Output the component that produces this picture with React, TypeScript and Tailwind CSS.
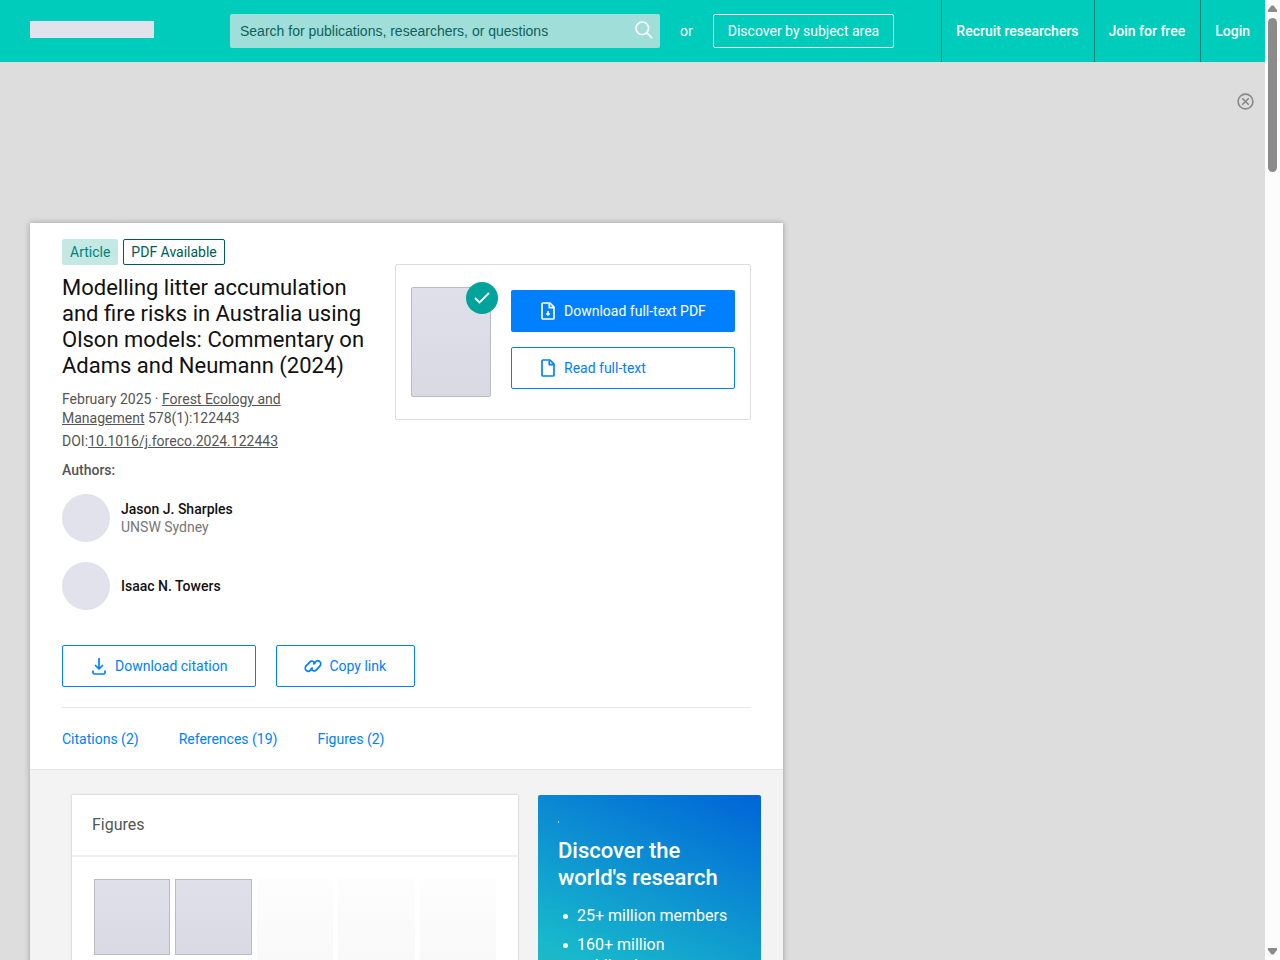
import type { ReactNode } from 'react';

const authors = [
  { name: 'Jason J. Sharples', affiliation: 'UNSW Sydney' },
  { name: 'Isaac N. Towers', affiliation: '' },
];

const tabs = ['Citations (2)', 'References (19)', 'Figures (2)'];

const benefits = ['25+ million members', '160+ million publication pages', '2.3+ billion citations'];

function SearchIcon() {
  return (
    <svg width="18" height="18" viewBox="0 0 18 18" fill="none" stroke="currentColor" strokeWidth="1.6">
      <circle cx="7.3" cy="7.3" r="6.3" />
      <path d="M11.8 11.8l5 5" strokeLinecap="round" />
    </svg>
  );
}

function FileIcon({ download = false }: { download?: boolean }) {
  return (
    <svg width="14" height="18" viewBox="0 0 14 18" fill="none" stroke="currentColor" strokeWidth="1.7" strokeLinejoin="round">
      <path d="M2 1h7l4 4.2V16a1 1 0 0 1-1 1H2a1 1 0 0 1-1-1V2a1 1 0 0 1 1-1z" />
      <path d="M8.3 1.5v4.2H13" />
      {download && <path d="M7 9v4" />}
      {download && <path d="M5.200 11.800L7 13.600l1.800-1.800z" fill="currentColor" strokeWidth="1" />}
    </svg>
  );
}

function DownloadIcon() {
  return (
    <svg width="14" height="18" viewBox="0 0 14 18" fill="none" stroke="currentColor" strokeWidth="1.7" strokeLinecap="round" strokeLinejoin="round">
      <path d="M7 1.5v10M3.5 8.5L7 12l3.5-3.5" />
      <path d="M1 14v1.5a1.500 1.500 0 0 0 1.500 1.500h9a1.500 1.500 0 0 0 1.500-1.500V14" />
    </svg>
  );
}

function LinkIcon() {
  return (
    <svg width="18" height="14" viewBox="0 0 18 14" fill="none" stroke="currentColor" strokeWidth="1.700" strokeLinecap="round">
      <path transform="translate(6 7.200) rotate(-48)" d="M0 3H-2.600a3 3 0 0 1 0-6H2.800a3 3 0 0 1 2.400 4.800" />
      <path transform="translate(12 6.800) rotate(132)" d="M0 3H-2.600a3 3 0 0 1 0-6H2.800a3 3 0 0 1 2.400 4.800" />
    </svg>
  );
}

function Arrow({ down = false }: { down?: boolean }) {
  return (
    <svg width="9" height="7" viewBox="0 0 9 7" fill="#8b8b8b">
      <path d={down ? 'M0 0h9v2L5.500 6.500h-2L0 2z' : 'M0 7h9V5L5.500.500h-2L0 5z'} />
    </svg>
  );
}

function OutlineButton({ icon, children }: { icon: ReactNode; children: ReactNode }) {
  return (
    <button className="flex h-[42px] items-center gap-[7px] rounded-xs border border-[#0080ff] pr-7 pl-[27px] text-sm text-[#0080ff]">
      <span className="flex w-[18px] justify-center">{icon}</span>
      {children}
    </button>
  );
}

function Header() {
  return (
    <header className="flex h-[62px] shrink-0 items-center bg-[#00ccbb] pl-[30px] text-sm text-white">
      <a href="#" aria-label="Home" className="mr-[76px] mb-1 h-[17px] w-[124px] shrink-0 bg-[#e2e2ec]" />
      <form className="flex h-[34px] w-[430px] items-center rounded-xs bg-[#a0dfd9] pr-[7px] pl-2.5">
        <input
          type="text"
          aria-label="Search"
          placeholder="Search for publications, researchers, or questions"
          className="min-w-0 flex-1 bg-transparent font-['Liberation_Sans',sans-serif] text-sm outline-none placeholder:text-[#10605b]"
        />
        <button type="button" aria-label="Submit search" className="mb-0.5">
          <SearchIcon />
        </button>
      </form>
      <span className="mx-5">or</span>
      <a href="#" className="flex h-[34px] items-center rounded-xs border border-white px-3.5">
        Discover by subject area
      </a>
      <nav className="ml-auto flex h-full font-medium">
        <a href="#" className="flex items-center border-l border-[#00827a] pr-[15px] pl-3.5">Recruit researchers</a>
        <a href="#" className="flex items-center border-l border-[#00827a] pr-[15px] pl-3.5">Join for free</a>
        <a href="#" className="flex items-center border-l border-[#00827a] pr-[15px] pl-3.5">Login</a>
      </nav>
    </header>
  );
}

function Publication() {
  return (
    <div className="px-8 pt-4">
      <div className="flex gap-5">
        <div className="min-w-0 flex-1">
          <div className="flex gap-[5px] text-sm">
            <span className="flex h-[26px] items-center rounded-xs bg-[#c4e8e4] px-2 text-[#00827a]">Article</span>
            <span className="flex h-[26px] items-center rounded-xs border border-[#005c57] px-[7px] text-[#005c57]">
              PDF Available
            </span>
          </div>
          <h1 className="mt-2.5 text-[22px] leading-[26px] text-[#111]">
            Modelling litter accumulation and fire risks in Australia using Olson models: Commentary on Adams and Neumann
            (2024)
          </h1>
          <div className="mt-[11px] w-60 text-sm leading-[19px] text-[#555]">
            February 2025 ·{' '}
            <a href="#" className="underline">Forest Ecology and Management</a> 578(1):122443
          </div>
          <div className="mt-1 text-sm leading-[19px] text-[#555]">
            DOI:<a href="#" className="underline">10.1016/j.foreco.2024.122443</a>
          </div>
          <h2 className="mt-[9px] text-sm font-medium text-[#555]">Authors:</h2>
          <ul className="mt-3.5 flex flex-col gap-5">
            {authors.map((author) => (
              <li key={author.name} className="flex items-center gap-[11px] text-sm leading-[18px]">
                <span className="size-12 rounded-full bg-[#e2e2ec]" />
                <div>
                  <a href="#" className="font-medium text-[#111]">{author.name}</a>
                  {author.affiliation && <div className="text-[#777]">{author.affiliation}</div>}
                </div>
              </li>
            ))}
          </ul>
        </div>

        {/* Full text box */}
        <div className="mt-[25px] flex h-[156px] w-[356px] shrink-0 items-center gap-5 self-start rounded-xs border border-[#ddd] px-[15px]">
          <div className="relative h-[110px] w-20 shrink-0 rounded-xs border border-[#bbbbc5] bg-linear-to-b from-[#e0e0ea] to-[#d9d9e3]">
            <span className="absolute -top-1.5 -right-2 flex size-8 items-center justify-center rounded-full bg-[#00a39b]">
              <svg width="16" height="12" viewBox="0 0 16 12" fill="none" stroke="#fff" strokeWidth="1.8">
                <path d="M1 6l4.500 4.500L15 1" />
              </svg>
            </span>
          </div>
          <div className="flex flex-1 flex-col gap-[15px] pb-1.5 text-sm">
            <button className="flex h-[42px] items-center gap-[9px] rounded-xs bg-[#0080ff] pl-[30px] text-white">
              <FileIcon download />
              Download full-text PDF
            </button>
            <button className="flex h-[42px] items-center gap-[9px] rounded-xs border border-[#0080ff] pl-[29px] text-[#0080ff]">
              <FileIcon />
              Read full-text
            </button>
          </div>
        </div>
      </div>

      <div className="mt-[35px] flex gap-5">
        <OutlineButton icon={<DownloadIcon />}>Download citation</OutlineButton>
        <OutlineButton icon={<LinkIcon />}>Copy link</OutlineButton>
      </div>

      <nav className="mt-5 flex h-[62px] items-center gap-10 border-t border-[#e8e8e8] text-sm text-[#0080ff]">
        {tabs.map((tab) => (
          <a key={tab} href="#">{tab}</a>
        ))}
      </nav>
    </div>
  );
}

function Figures() {
  return (
    <section className="min-w-0 flex-1 bg-white shadow-[0_0_2px_rgba(0,0,0,0.25)]">
      <h2 className="flex h-[62px] items-center border-b-2 border-[#eee] px-5 text-base text-[#555]">Figures</h2>
      <div className="grid grid-cols-5 items-start gap-[5px] px-[22px] pt-[22px]">
        {[1, 2].map((n) => (
          <a
            key={n}
            href="#"
            aria-label={`Figure ${n}`}
            className="aspect-square border border-[#bbbbc5] bg-linear-to-b from-[#e0e0ea] to-[#d9d9e3]"
          />
        ))}
        {[3, 4, 5].map((n) => (
          <div key={n} className="h-28 bg-linear-to-b from-[#fdfdfd] to-[#f7f7f7]" />
        ))}
      </div>
    </section>
  );
}

function Promo() {
  return (
    <aside className="w-[223px] shrink-0 rounded-xs bg-linear-[25deg] from-[#40ba9b] from-0% via-[#18b8cc] via-40% to-[#0064d8] to-100% px-5 pt-[26px] pb-24 text-white">
      <div className="h-0.5 w-px bg-white/60" />
      <h2 className="mt-3.5 text-[22px] leading-[27px] font-medium">Discover the world's research</h2>
      <ul className="mt-3.5 flex flex-col gap-2 pl-[5px] text-base leading-[21px]">
        {benefits.map((benefit) => (
          <li key={benefit} className="flex gap-[9px]">
            <span className="mt-[9px] size-[5px] shrink-0 rounded-full bg-white" />
            {benefit}
          </li>
        ))}
      </ul>
    </aside>
  );
}

export default function App() {
  return (
    <div className="flex h-screen overflow-hidden bg-[#ddd] font-[Roboto,sans-serif]">
      <div className="flex min-w-0 flex-1 flex-col">
        <Header />
        <div className="flex h-[161px] shrink-0 items-start justify-end pt-[31px] pr-[11px]">
          <button aria-label="Close" className="text-[#888]">
            <svg width="17" height="17" viewBox="0 0 17 17" fill="none" stroke="currentColor" strokeWidth="1.6">
              <circle cx="8.5" cy="8.5" r="7.400" />
              <path d="M5.200 5.200l6.600 6.600M11.800 5.200l-6.600 6.600" />
            </svg>
          </button>
        </div>
        <div className="flex px-[30px]">
          <main className="min-w-0 flex-1 bg-white shadow-[0_0_6px_rgba(0,0,0,0.3)]">
            <Publication />
            <div className="flex items-start gap-5 border-t border-[#e4e4e4] bg-[#f3f3f3] pt-[25px] pr-[22px] pl-[42px]">
              <Figures />
              <Promo />
            </div>
          </main>
          <aside className="w-[452px] shrink-0" />
        </div>
      </div>

      {/* Scroll bar */}
      <div className="flex w-[15px] shrink-0 flex-col items-center bg-[#fcfcfc] pt-[5px] pb-[5px]">
        <Arrow />
        <div className="mt-1.5 h-[154px] w-[9px] rounded-full bg-[#8b8b8b]" />
        <div className="mt-auto">
          <Arrow down />
        </div>
      </div>
    </div>
  );
}
